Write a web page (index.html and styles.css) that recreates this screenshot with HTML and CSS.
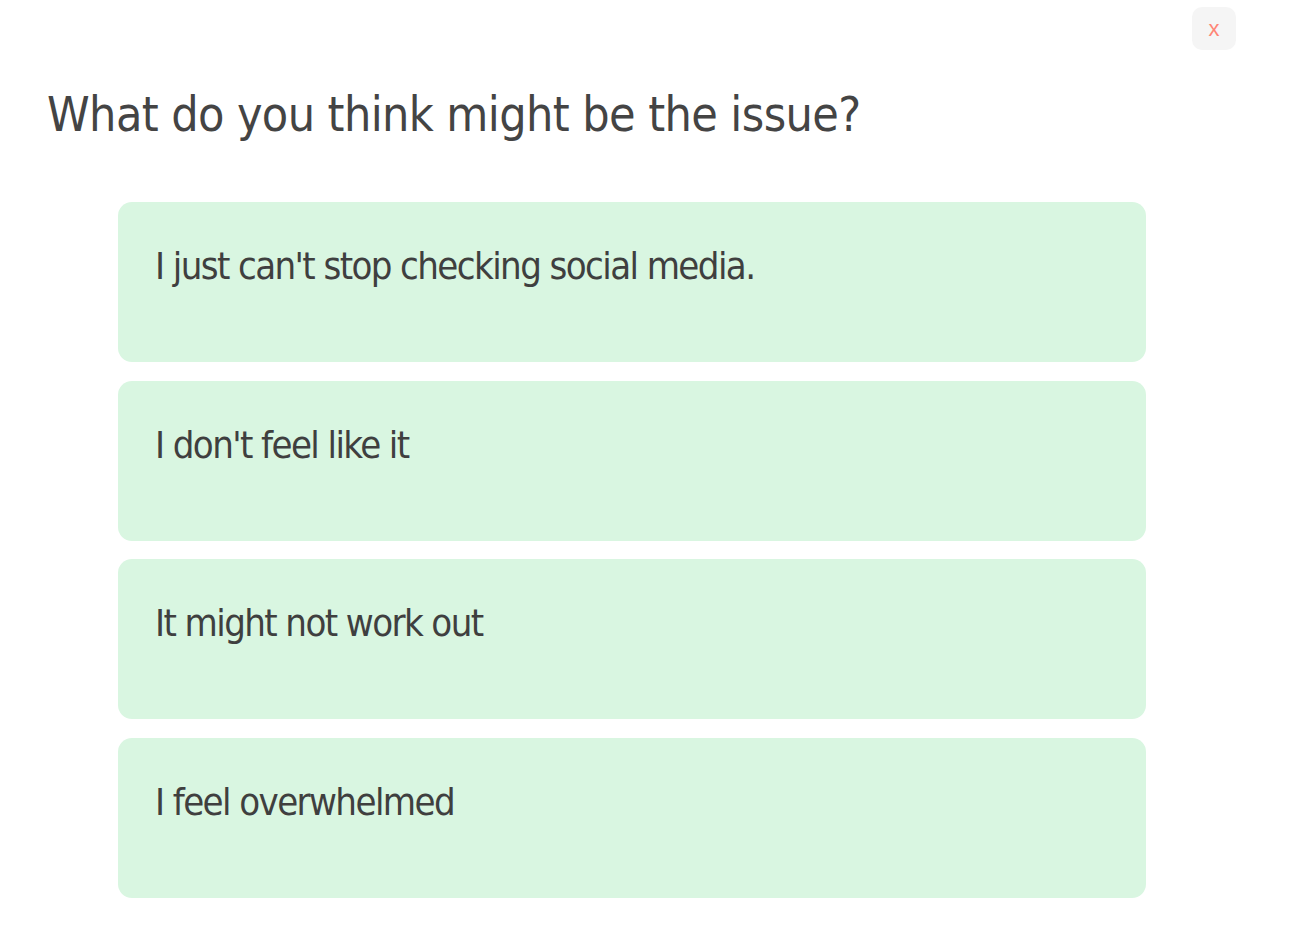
FILE: index.html
```html
<!DOCTYPE html>
<html lang="en">
<head>
  <meta charset="UTF-8">
  <meta name="viewport" content="width=device-width, initial-scale=1.0">
  <title>Issue</title>
  <link rel="stylesheet" href="styles.css">
</head>
<body>
  <div id="container">
    <div class="top-bar">
      <button class="close" type="button">x</button>
    </div>
    <h1 class="question">What do you think might be the issue?</h1>
    <div class="answers">
      <div class="answer">I just can't stop checking social media.</div>
      <div class="answer">I don't feel like it</div>
      <div class="answer">It might not work out</div>
      <div class="answer">I feel overwhelmed</div>
    </div>
  </div>
</body>
</html>
```

FILE: styles.css
```css
body {
  font-family: "DejaVu Sans Condensed", "Liberation Sans", sans-serif;
  margin: 0;
  padding: 0;
  background-color: #ffffff;
  color: #444444;
}

#container {
  padding: 7px 63px 0 47px;
}
.top-bar {
  display: flex;
  justify-content: flex-end;
}
.close {
  width: 44px;
  height: 43px;
  border: none;
  border-radius: 10px;
  background-color: #f5f5f5;
  color: #ff8575;
  font-family: "Liberation Sans", sans-serif;
  font-size: 22px;
  padding: 0;
  cursor: pointer;
}
.question {
  font-size: 48px;
  font-weight: 400;
  letter-spacing: -0.6px;
  margin: 32px 0 0;
  line-height: 64px;
}
.answers {
  display: flex;
  flex-direction: column;
  gap: 18.7px;
  width: 1028px;
  margin: 56px 0 0 71px;
}
.answer {
  height: 160px;
  box-sizing: border-box;
  padding: 36px 37px;
  background-color: #d9f6e1;
  border-radius: 14px;
  font-size: 38px;
  letter-spacing: -1.6px;
  line-height: 56px;
  color: #3f3f3f;
}
```
